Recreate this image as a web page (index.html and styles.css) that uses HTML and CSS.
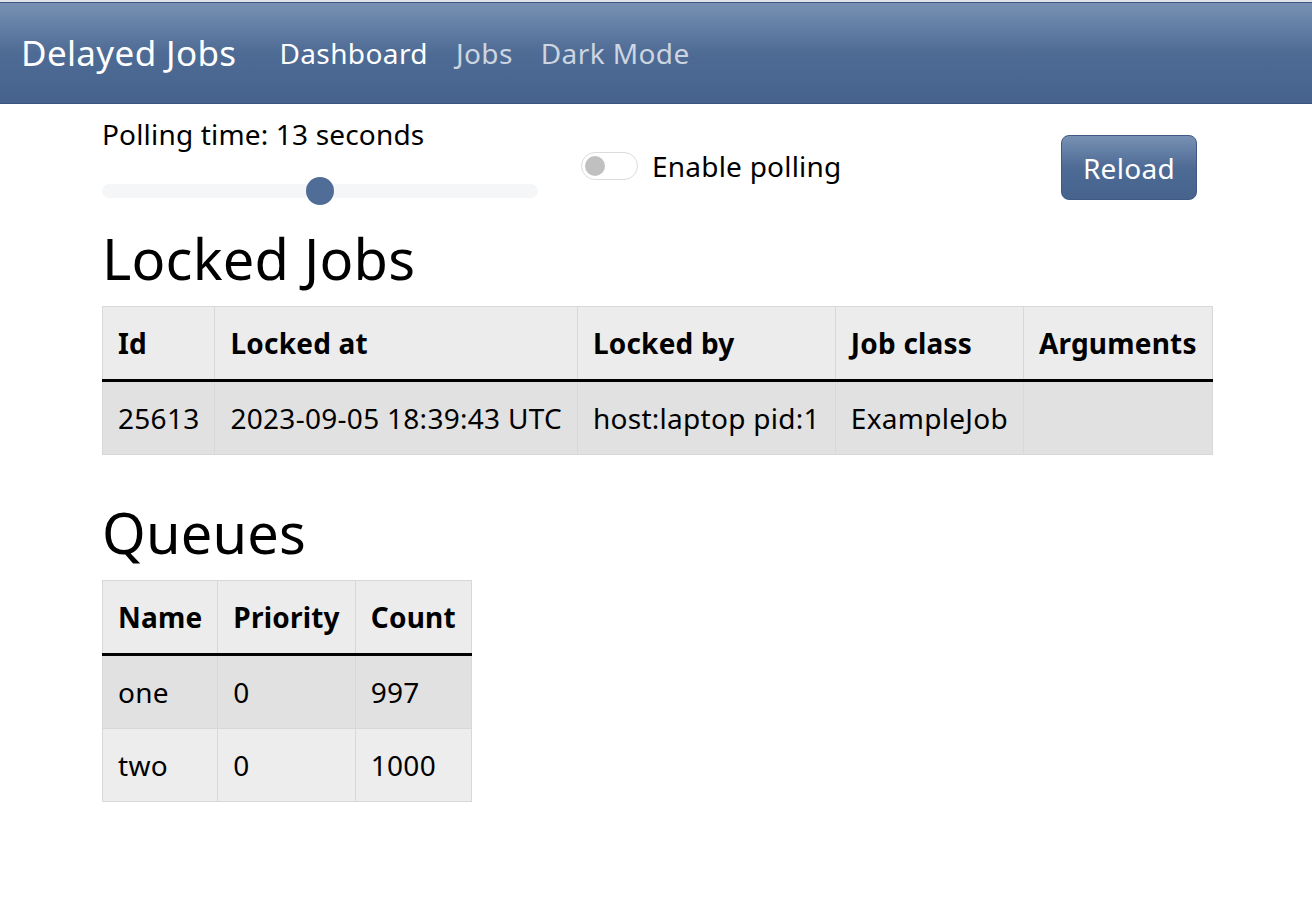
FILE: index.html
```html
<!DOCTYPE html>
<html lang="en">
<head>
<meta charset="utf-8">
<title>Delayed Jobs</title>
<link rel="stylesheet" href="styles.css">
</head>
<body>
<header class="topbar">
  <nav class="navbar">
    <a class="brand" href="#">Delayed Jobs</a>
    <a class="nav-link active" href="#">Dashboard</a>
    <a class="nav-link" href="#">Jobs</a>
    <a class="nav-link" href="#">Dark Mode</a>
  </nav>
</header>
<main class="container">
  <section class="controls">
    <div class="poll">
      <div class="poll-label">Polling time: 13 seconds</div>
      <input class="range" type="range" min="1" max="25" value="13">
    </div>
    <label class="switch-wrap">
      <span class="switch"><span class="knob"></span></span>
      <span class="switch-label">Enable polling</span>
    </label>
    <button class="btn" type="button">Reload</button>
  </section>

  <h2 class="title first">Locked Jobs</h2>
  <table class="table locked">
    <thead>
      <tr><th>Id</th><th>Locked at</th><th>Locked by</th><th>Job class</th><th>Arguments</th></tr>
    </thead>
    <tbody>
      <tr><td>25613</td><td>2023-09-05 18:39:43 UTC</td><td>host:laptop pid:1</td><td>ExampleJob</td><td></td></tr>
    </tbody>
  </table>

  <h2 class="title">Queues</h2>
  <table class="table">
    <thead>
      <tr><th>Name</th><th>Priority</th><th>Count</th></tr>
    </thead>
    <tbody>
      <tr><td>one</td><td>0</td><td>997</td></tr>
      <tr><td>two</td><td>0</td><td>1000</td></tr>
    </tbody>
  </table>
</main>
</body>
</html>
```

FILE: styles.css
```css
html, body {
  margin: 0;
  padding: 0;
  background: #ffffff;
}
body {
  font-family: "Noto Sans", "Open Sans", "Liberation Sans", sans-serif;
  font-size: 28px;
  line-height: 42px;
  color: #000000;
  letter-spacing: 0.2px;
}
.topbar {
  border-top: 2px solid #dfe2e7;
}
.navbar {
  display: flex;
  align-items: center;
  height: 100px;
  padding-left: 21px;
  border-top: 1px solid #3e5a84;
  border-bottom: 1px solid #3b5580;
  background-image: linear-gradient(#7891b3, #4e6b95 50%, #46638e);
}
.brand {
  font-size: 35px;
  color: #ffffff;
  text-decoration: none;
  margin-right: 29px;
  line-height: 50px;
  letter-spacing: 0.35px;
}
.nav-link {
  padding: 0 14px;
  color: rgba(255, 255, 255, 0.72);
  text-decoration: none;
  font-size: 28px;
  letter-spacing: 0.4px;
}
.nav-link.active {
  color: #ffffff;
}
.container {
  max-width: 1108px;
  margin: 0 auto;
}
.controls {
  display: flex;
  align-items: flex-start;
  padding-top: 9px;
}
.poll {
  width: 436px;
}
.poll-label {
  line-height: 42px;
  letter-spacing: 0.17px;
}
.range {
  -webkit-appearance: none;
  appearance: none;
  display: block;
  width: 436px;
  height: 28px;
  margin: 22px 0 0 0;
  padding: 0;
  background: transparent;
}
.range::-webkit-slider-runnable-track {
  height: 14px;
  border-radius: 14px;
  background: #f5f6f8;
}
.range::-webkit-slider-thumb {
  -webkit-appearance: none;
  appearance: none;
  width: 28px;
  height: 28px;
  margin-top: -7px;
  border-radius: 50%;
  border: 0;
  background: #4f6d97;
}
.switch-wrap {
  display: flex;
  align-items: center;
  gap: 14px;
  margin-left: 43px;
  margin-top: 32px;
}
.switch {
  display: flex;
  align-items: center;
  box-sizing: border-box;
  width: 57px;
  height: 28px;
  border: 1px solid #dcdcdc;
  border-radius: 14px;
  background: #ffffff;
  padding-left: 3px;
}
.knob {
  width: 20px;
  height: 20px;
  border-radius: 50%;
  background: #c0c0c0;
}
.switch-label {
  line-height: 42px;
  letter-spacing: 0.22px;
}
.btn {
  margin-left: auto;
  margin-right: 13px;
  margin-top: 22px;
  font-family: inherit;
  font-size: 28px;
  line-height: 42px;
  letter-spacing: 0.3px;
  padding: 10.5px 21px;
  color: #ffffff;
  border: 1px solid #3f5b85;
  border-radius: 8px;
  background-image: linear-gradient(#7891b3, #4e6b95 50%, #46638e);
}
.title {
  font-size: 56px;
  font-weight: 400;
  line-height: 67px;
  margin: 0 0 14px 0;
  letter-spacing: 0.2px;
}
.title.first {
  margin-top: 20px;
}
.table {
  border-collapse: collapse;
  margin-bottom: 44px;
}
.table th, .table td {
  padding: 15px;
  line-height: 42px;
  text-align: left;
  border: 1px solid #d8d8d8;
  white-space: nowrap;
}
.table td {
  letter-spacing: 0.28px;
}
.table th {
  font-weight: 700;
  letter-spacing: 0.2px;
  background: #ececec;
  border-bottom: 3px solid #000000;
}
.table tbody tr:nth-child(odd) td {
  background: #e1e1e1;
}
.table tbody tr:nth-child(even) td {
  background: #ededed;
}
```
